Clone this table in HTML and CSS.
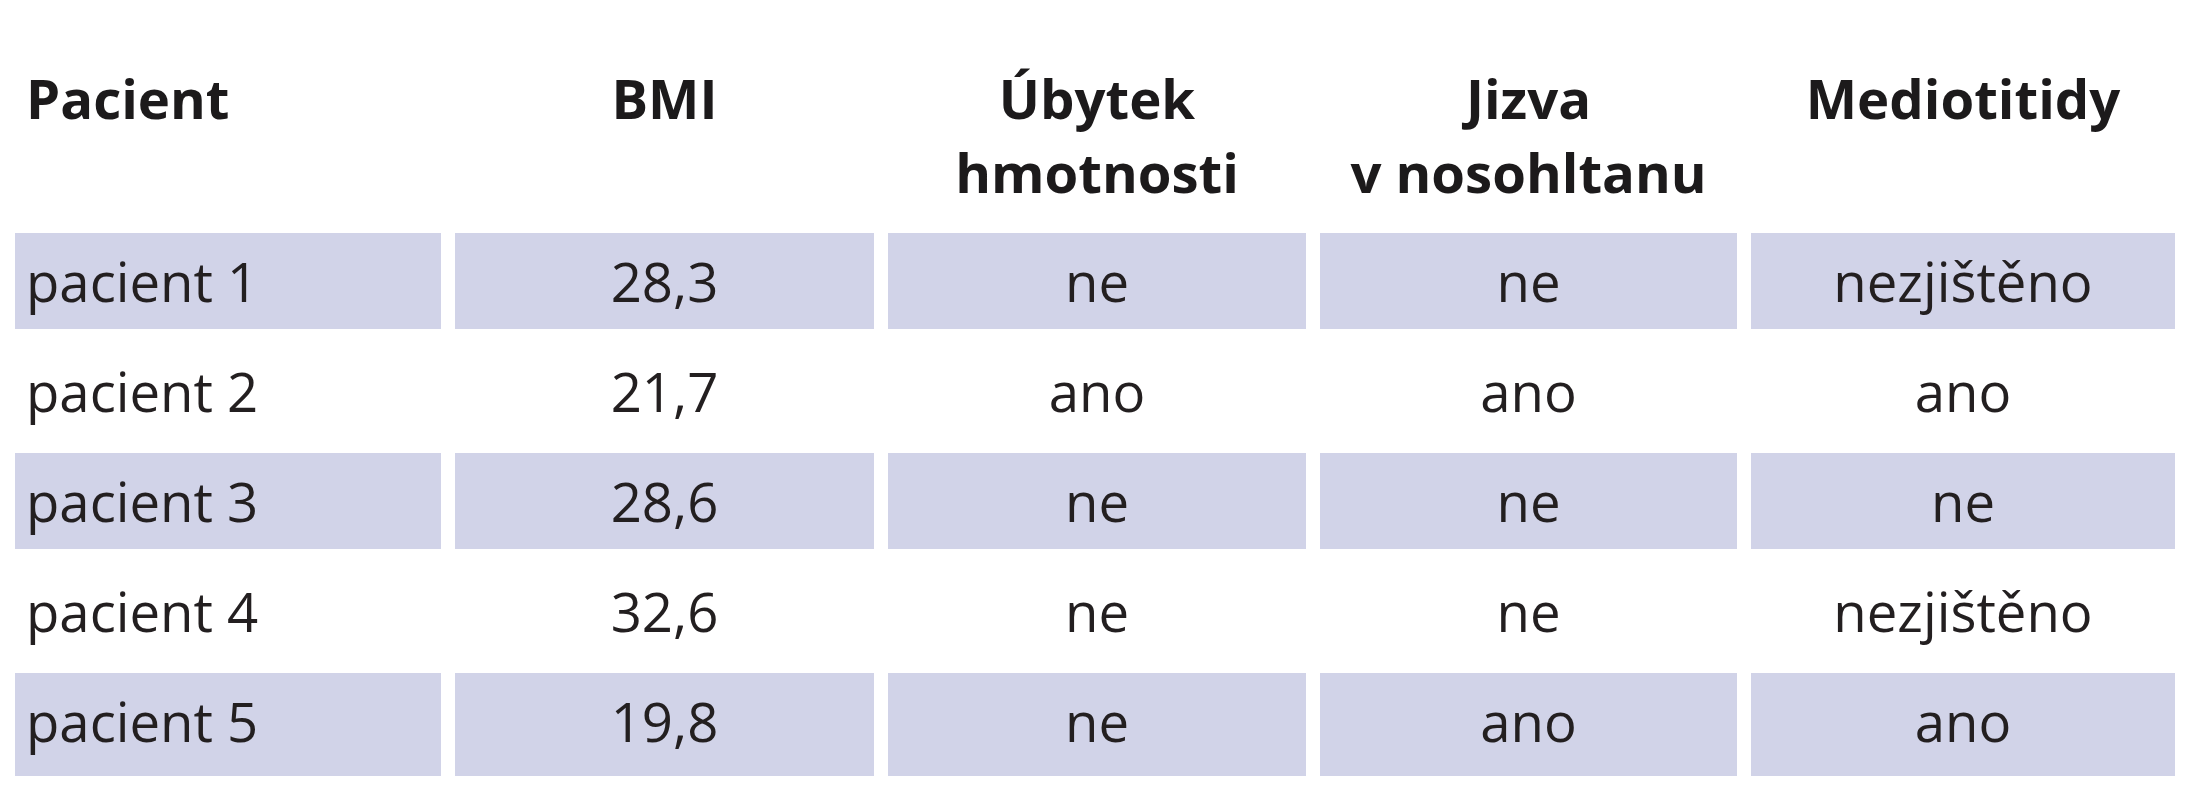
FILE: index.html
```html
<!DOCTYPE html>
<html lang="cs">
<head>
<meta charset="utf-8">
<title>Pacienti</title>
<link rel="stylesheet" href="styles.css">
</head>
<body>
<div class="table">
  <div class="th first">Pacient</div>
  <div class="th">BMI</div>
  <div class="th">Úbytek<br>hmotnosti</div>
  <div class="th">Jizva<br>v nosohltanu</div>
  <div class="th">Mediotitidy</div>

  <div class="td first shade">pacient 1</div>
  <div class="td shade">28,3</div>
  <div class="td shade">ne</div>
  <div class="td shade">ne</div>
  <div class="td shade">nezjištěno</div>

  <div class="td first">pacient 2</div>
  <div class="td">21,7</div>
  <div class="td">ano</div>
  <div class="td">ano</div>
  <div class="td">ano</div>

  <div class="td first shade">pacient 3</div>
  <div class="td shade">28,6</div>
  <div class="td shade">ne</div>
  <div class="td shade">ne</div>
  <div class="td shade">ne</div>

  <div class="td first">pacient 4</div>
  <div class="td">32,6</div>
  <div class="td">ne</div>
  <div class="td">ne</div>
  <div class="td">nezjištěno</div>

  <div class="td first shade">pacient 5</div>
  <div class="td shade">19,8</div>
  <div class="td shade">ne</div>
  <div class="td shade">ano</div>
  <div class="td shade">ano</div>
</div>
</body>
</html>
```

FILE: styles.css
```css
html, body {
  margin: 0;
  padding: 0;
  background: #ffffff;
}

body {
  font-family: "Open Sans", "Noto Sans", "Liberation Sans", sans-serif;
  color: #231f20;
}

.table {
  display: grid;
  grid-template-columns: 426px 419px 418px 417px 424px;
  grid-template-rows: 158px 96px 96px 96px 96px 103px;
  column-gap: 14px;
  row-gap: 14px;
  padding: 61px 0 0 15px;
}

.th {
  font-weight: 700;
  font-size: 54.5px;
  line-height: 74px;
  text-align: center;
  color: #1c1a1b;
}

.td {
  font-size: 54.5px;
  line-height: 96px;
  text-align: center;
  white-space: nowrap;
}

.first {
  text-align: left;
  padding-left: 11px;
}

.shade {
  background: #d1d3e8;
}
```
